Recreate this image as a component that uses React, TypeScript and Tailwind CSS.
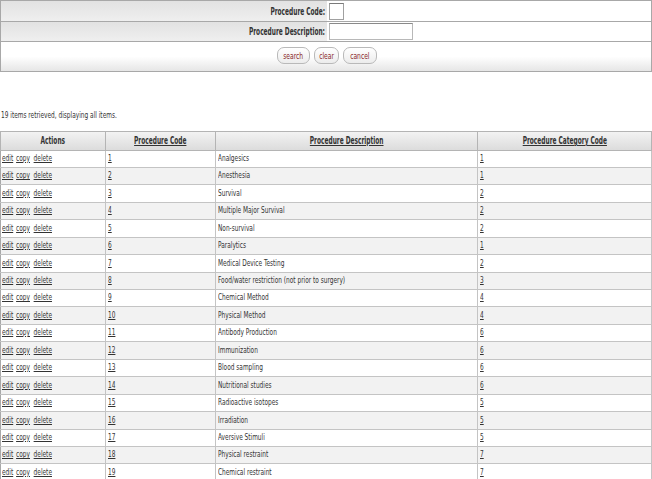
import { FC, ReactNode } from 'react';

type Row = { code: string; desc: string; cat: string };

const rows: Row[] = [
    { code: '1', desc: 'Analgesics', cat: '1' },
    { code: '2', desc: 'Anesthesia', cat: '1' },
    { code: '3', desc: 'Survival', cat: '2' },
    { code: '4', desc: 'Multiple Major Survival', cat: '2' },
    { code: '5', desc: 'Non-survival', cat: '2' },
    { code: '6', desc: 'Paralytics', cat: '1' },
    { code: '7', desc: 'Medical Device Testing', cat: '2' },
    { code: '8', desc: 'Food/water restriction (not prior to surgery)', cat: '3' },
    { code: '9', desc: 'Chemical Method', cat: '4' },
    { code: '10', desc: 'Physical Method', cat: '4' },
    { code: '11', desc: 'Antibody Production', cat: '6' },
    { code: '12', desc: 'Immunization', cat: '6' },
    { code: '13', desc: 'Blood sampling', cat: '6' },
    { code: '14', desc: 'Nutritional studies', cat: '6' },
    { code: '15', desc: 'Radioactive isotopes', cat: '5' },
    { code: '16', desc: 'Irradiation', cat: '5' },
    { code: '17', desc: 'Aversive Stimuli', cat: '5' },
    { code: '18', desc: 'Physical restraint', cat: '7' },
    { code: '19', desc: 'Chemical restraint', cat: '7' },
];

const font = { fontFamily: '"DejaVu Sans Condensed", "DejaVu Sans", sans-serif' };

// the old page font is very narrow, so squeeze text horizontally
const Narrow: FC<{ children: ReactNode; className?: string }> = ({ children, className }) => (
    <span className={'inline-block whitespace-nowrap ' + (className ?? 'origin-left scale-x-[0.72]')}>{children}</span>
);

const Btn: FC<{ label: string; w: string }> = ({ label, w }) => (
    <button
        className={
            'h-[17px] rounded-[7px] border border-[#b9b9b9] bg-gradient-to-b from-white to-[#ececec] text-[9.5px] text-[#8a1f2a] leading-none flex items-center justify-center ' +
            w
        }
    >
        <Narrow className="origin-center scale-x-[0.7]">{label}</Narrow>
    </button>
);

const App: FC = () => {
    return (
        <div className="w-[652px] h-[479px] overflow-hidden bg-white text-[#222]" style={font}>
            <div className="border border-[#a8a8a8]">
                <div className="flex h-[21px] border-b border-[#a8a8a8]">
                    <div className="w-[326px] flex items-center justify-end pr-[2px] bg-gradient-to-b from-[#e2e2e2] to-[#efefef] text-[10px] font-bold text-[#333]">
                        <Narrow className="origin-right scale-x-[0.65]">Procedure Code:</Narrow>
                    </div>
                    <div className="flex-1 flex items-center pl-[2px]">
                        <input className="w-[15px] h-[17px] border border-[#a0a0a0] border-t-[#7a7a7a] bg-white" />
                    </div>
                </div>
                <div className="flex h-[20px] border-b border-[#a8a8a8]">
                    <div className="w-[326px] flex items-center justify-end pr-[2px] bg-gradient-to-b from-[#e2e2e2] to-[#efefef] text-[10px] font-bold text-[#333]">
                        <Narrow className="origin-right scale-x-[0.65]">Procedure Description:</Narrow>
                    </div>
                    <div className="flex-1 flex items-center pl-[2px]">
                        <input className="w-[84px] h-[17px] border border-[#b8b8b8] border-t-[#8a8a8a] bg-white" />
                    </div>
                </div>
                <div className="flex h-[29px] items-start justify-center gap-[4px] pt-[5px] pl-[2px] bg-gradient-to-b from-white via-white to-[#e6e6e6]">
                    <Btn label="search" w="w-[33px]" />
                    <Btn label="clear" w="w-[25px]" />
                    <Btn label="cancel" w="w-[34px]" />
                </div>
            </div>

            <div className="mt-[37px] text-[9px] text-[#333] pl-[1px]">
                <Narrow>19 items retrieved, displaying all items.</Narrow>
            </div>

            <table className="mt-[8px] w-[652px] border-collapse table-fixed text-[9px] text-[#333] border border-[#a8a8a8]">
                <colgroup>
                    <col className="w-[105px]" />
                    <col className="w-[110px]" />
                    <col className="w-[262px]" />
                    <col />
                </colgroup>
                <thead>
                    <tr className="h-[19px] bg-gradient-to-b from-[#f4f4f4] to-[#dcdcdc] text-[10px] font-bold">
                        <th className="border border-[#b4b4b4] font-bold">
                            <Narrow className="origin-center scale-x-[0.65]">Actions</Narrow>
                        </th>
                        <th className="border border-[#b4b4b4] font-bold">
                            <Narrow className="origin-center scale-x-[0.65] underline">Procedure Code</Narrow>
                        </th>
                        <th className="border border-[#b4b4b4] font-bold">
                            <Narrow className="origin-center scale-x-[0.65] underline">Procedure Description</Narrow>
                        </th>
                        <th className="border border-[#b4b4b4] font-bold">
                            <Narrow className="origin-center scale-x-[0.65] underline">Procedure Category Code</Narrow>
                        </th>
                    </tr>
                </thead>
                <tbody>
                    {rows.map((r, i) => (
                        <tr key={r.code} className={i % 2 === 1 ? 'h-[17.45px] bg-[#f2f2f2]' : 'h-[17.45px] bg-white'}>
                            <td className="border-y border-[#c4c4c4] pl-[1px]">
                                <Narrow>
                                    <span className="underline">edit</span>
                                    <span className="underline ml-[4px]">copy</span>
                                    <span className="underline ml-[5px]">delete</span>
                                </Narrow>
                            </td>
                            <td className="border border-[#c4c4c4] pl-[2px]">
                                <Narrow className="origin-left scale-x-[0.72] underline">{r.code}</Narrow>
                            </td>
                            <td className="border border-[#c4c4c4] pl-[2px]">
                                <Narrow>{r.desc}</Narrow>
                            </td>
                            <td className="border border-[#c4c4c4] pl-[2px]">
                                <Narrow className="origin-left scale-x-[0.72] underline">{r.cat}</Narrow>
                            </td>
                        </tr>
                    ))}
                </tbody>
            </table>
        </div>
    );
};

export default App;
